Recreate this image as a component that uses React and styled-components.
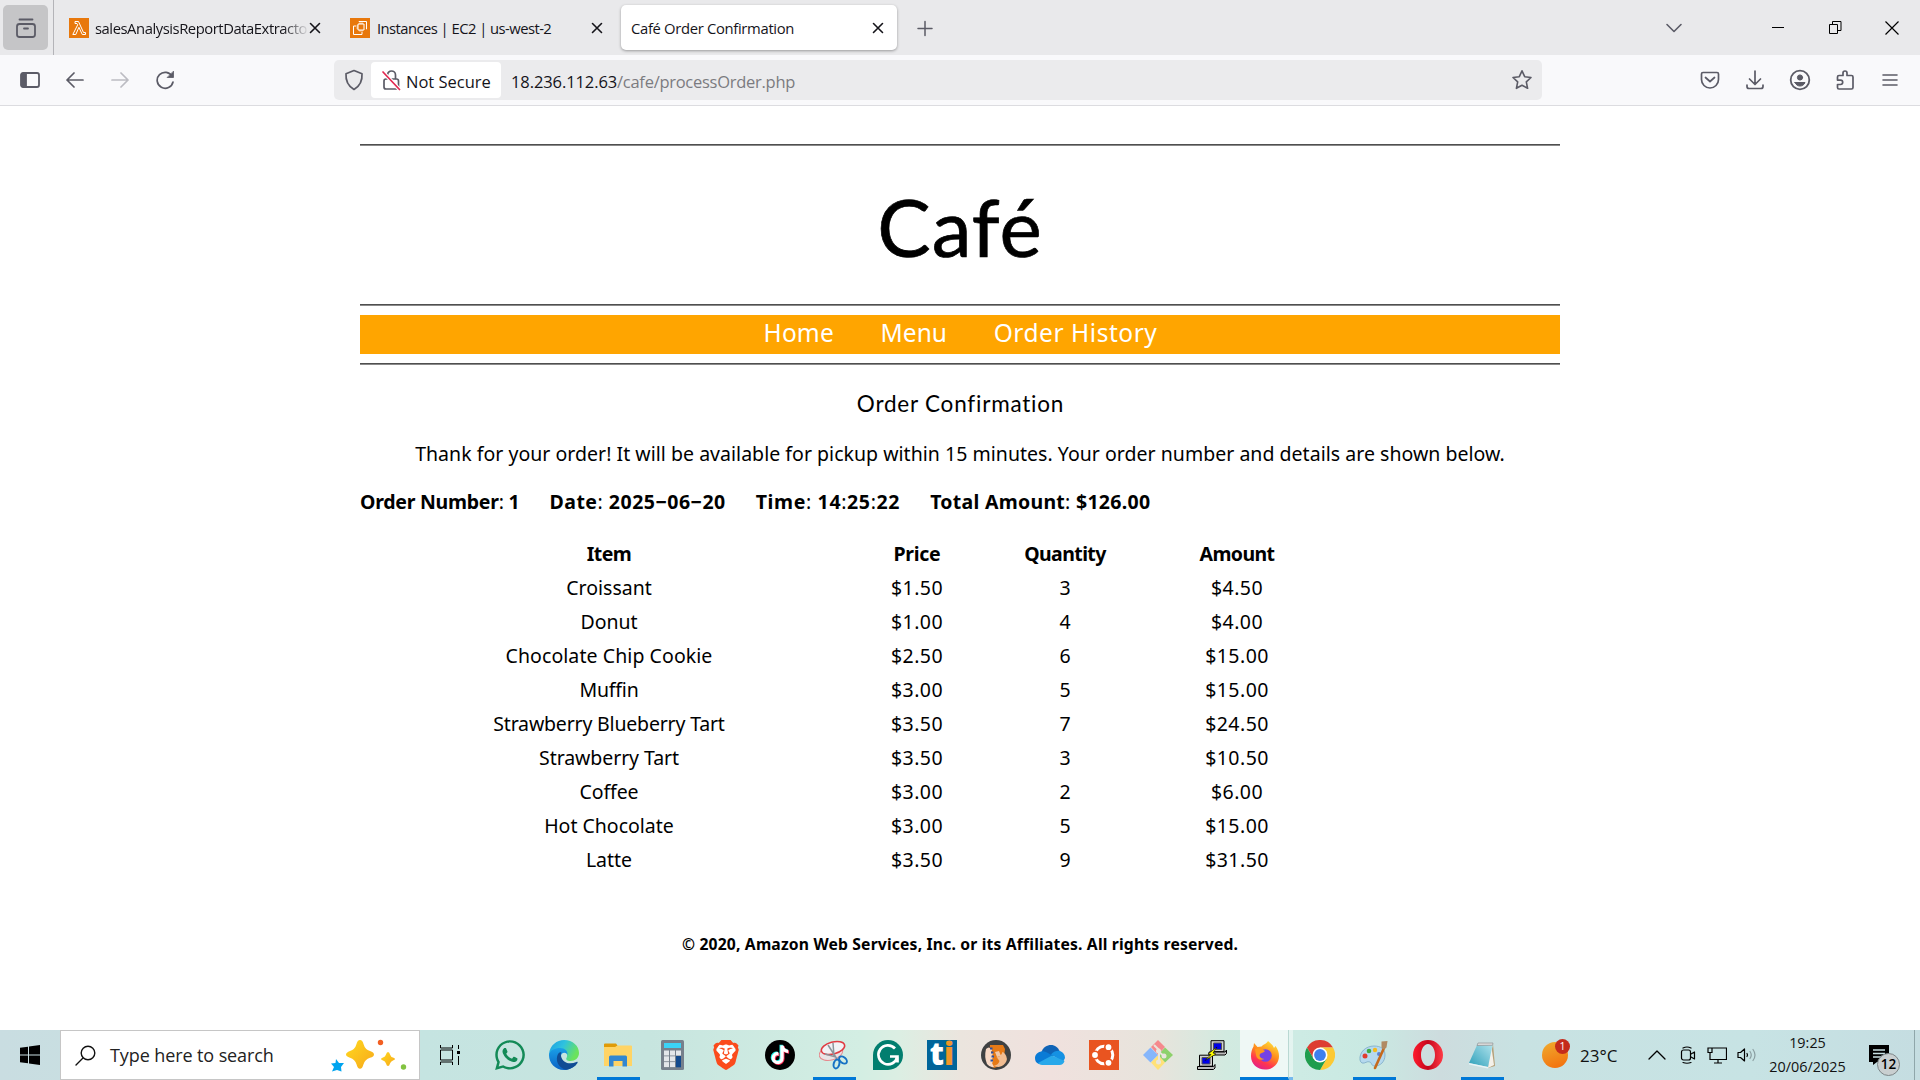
import React from "react";
import styled, { createGlobalStyle } from "styled-components";
import { FaWhatsapp, FaBrave, FaTiktok } from "react-icons/fa6";

const UI = `"Segoe UI", "Open Sans", "Noto Sans", sans-serif`;
const BODY = `"Lucida Sans", "Noto Sans", "Open Sans", sans-serif`;
const HAND = `"Comic Sans MS", Lato, "Open Sans", sans-serif`;

const Global = createGlobalStyle`
  * { box-sizing: border-box; }
  body { margin: 0; background: #fff; overflow: hidden; }
  svg { display: block; flex: none; }
`;
const Screen = styled.div`
  width: 1920px; height: 1080px; display: flex; flex-direction: column;
  background: #fff; font-family: ${UI}; color: #15141a;
`;
const Text = styled.span`
  letter-spacing: ${(p) => p.$ls || 0}px; white-space: pre;
  ${(p) => p.$color && `color: ${p.$color};`}
`;

/* ---------- tab strip ---------- */
const TabStrip = styled.header`
  height: 55px; flex: none; display: flex; align-items: center; background: #e9e9eb; padding-left: 3px;
`;
const ViewButton = styled.div`
  width: 45px; height: 45px; border-radius: 5px; background: #c5c5c7;
  display: flex; align-items: center; justify-content: center; margin-right: 5px;
`;
const Tab = styled.div`
  width: 276px; height: 45px; margin-left: ${(p) => p.$gap || 0}px; padding: 0 ${(p) => p.$right || 13}px 0 ${(p) => p.$left}px;
  display: flex; align-items: center; border-radius: 5px; font-size: 14.8px; color: #15141a;
  background: ${(p) => (p.$active ? "#fff" : "transparent")};
  box-shadow: ${(p) => (p.$active ? "0 1px 3px rgba(0,0,0,.35)" : "none")};
`;
const StripEdge = styled.div`width: 1px; height: 55px; background: #b4b4b8;`;
const TabTitle = styled.div`
  flex: 1; min-width: 0; overflow: hidden; margin-left: ${(p) => p.$left || 0}px; line-height: 24px;
  ${(p) => p.$fade && "-webkit-mask-image: linear-gradient(90deg,#000 88%,transparent 100%);"}
`;
const Spacer = styled.div`flex: ${(p) => (p.$w ? "none" : 1)}; width: ${(p) => p.$w || 0}px;`;
const WindowButtons = styled.div`display: flex; align-items: center; height: 55px;`;
const WinCell = styled.div`width: ${(p) => p.$w}px; display: flex; justify-content: center;`;

/* ---------- tool bar ---------- */
const ToolBar = styled.div`
  height: 51px; flex: none; display: flex; align-items: center; background: #f9f9fb; border-bottom: 1px solid #dcdce0;
  padding-left: 7px;
`;
const ToolCell = styled.div`width: 45px; display: flex; justify-content: center; color: ${(p) => p.$c || "#5b5b66"};`;
const UrlBar = styled.div`
  width: 1208px; height: 40px; border-radius: 5px; background: #ebebed; display: flex; align-items: center;
  margin-left: 147px; padding: 0 9px 0 9px; font-size: 16.5px; line-height: 24px; color: #15141a;
`;
const UrlText = styled.div`padding-top: 4px;`;
const Security = styled.div`
  width: 130px; height: 36px; border-radius: 4px; background: #fff; display: flex; align-items: center;
  margin: 0 10px 0 6px; padding-left: 11px; gap: 5px;
`;
const ToolIcons = styled.div`display: flex; align-items: center; margin-left: 145px;`;

/* ---------- page ---------- */
const Page = styled.main`
  width: 1200px; margin: 0 auto; flex: 1; padding-top: 38px; color: #000;
  font-family: ${BODY}; font-size: 19.5px; line-height: 34px;
`;
const Rule = styled.hr`
  margin: 0; height: 2px; border: 0; border-top: 1px solid #4f4f4f; background: #8a8a8a;
`;
const Title = styled.h1`
  margin: 0; height: 158px; padding-top: 32px; text-align: center; font: 400 80px/96px ${HAND};
  -webkit-text-stroke: .7px #000;
`;
const Nav = styled.nav`
  height: 39px; margin: 9px 0; background: orange; color: #fff; display: flex; justify-content: center;
  gap: 46.5px; font-size: 24.5px; line-height: 36px; padding-left: 1px;
`;
const Heading = styled.h2`
  margin: 19px 0 0; padding-left: 1px; text-align: center; font: 400 22.5px/40px ${HAND};
`;
const Thanks = styled.p`margin: 13px 0 0; text-align: center; line-height: 34px;`;
const Summary = styled.p`margin: 14px 0 0; font-weight: 700; display: flex; gap: 30px; line-height: 34px;`;
const Thin = styled.span`font-weight: 400;`;
const Grid = styled.section`display: grid; margin-top: 18px; grid-template-columns: 498px 118px 178px 166px; text-align: center;`;
const Head = styled.div`font-weight: 700; height: 34px;`;
const Cell = styled.div`height: 34px;`;
const Footer = styled.footer`margin-top: 50px; text-align: center; font-weight: 700; font-size: 15.7px; line-height: 34px;`;

/* ---------- task bar ---------- */
const TaskBar = styled.footer`
  height: 50px; flex: none; display: flex; font-family: ${UI};
  background: linear-gradient(90deg,#c9dde1 0,#c5e4e1 420px,#c7e5df 650px,#d3eee3 860px,#dceee3 900px,#ebe5de 960px,#f0e1de 1050px,#e7e4dc 1160px,#d2eae0 1225px,#cdebe4 1300px,#c9e9e2 1370px,#cddcde 1440px,#c8e2e2 1520px,#c7e3e4 1750px,#c5dde1 1920px);
`;
const Start = styled.div`width: 60px; display: flex; align-items: center; justify-content: center;`;
const Search = styled.div`
  width: 360px; background: #fff; border: 1px solid #c6c6c6; display: flex; align-items: center;
  padding: 0 11px 0 14px; font-size: 18px; color: #222; gap: 14px;
`;
const AppSlot = styled.div`
  width: ${(p) => p.$w || 54}px; height: 50px; display: flex; align-items: center; justify-content: center;
`;
const AppFace = styled.div`
  width: 43px; height: 50px; display: flex; align-items: center; justify-content: center;
  border-bottom: ${(p) => (p.$open ? "3px solid #0078d7" : "0")}; padding-top: ${(p) => (p.$open ? 3 : 0)}px;
`;
const FoxSlot = styled.div`
  width: 49px; height: 50px; background: rgba(255,255,255,.65); border-bottom: 3px solid #0078d7; padding: 3px 0 0 1px;
  display: flex; align-items: center; justify-content: center; border-right: 1px solid #b9d8d2;
`;
const FoxStack = styled.div`width: 4px; height: 50px; background: rgba(255,255,255,.45); border-bottom: 3px solid #76b9ed;`;
const Circle = styled.div`
  width: 30px; height: 30px; border-radius: 50%; background: #000; display: flex; align-items: center; justify-content: center;
`;
const Tray = styled.div`display: flex; align-items: center; flex: 1; color: #111; > * { flex: none; }`;
const Weather = styled.div`position: relative; width: 26px; height: 26px; border-radius: 50%; background: linear-gradient(160deg,#f0ac2e,#f36c0c); margin-left: 33px;`;
const WeatherBadge = styled.div`
  position: absolute; left: 13px; top: -3px; width: 15px; height: 15px; border-radius: 50%; background: #c42b1c;
  color: #fff; font-size: 10.5px; line-height: 15px; text-align: center;
`;
const Temp = styled.div`font-size: 17px; width: 73.5px; padding-left: 12px;`;
const TrayIcon = styled.div`width: ${(p) => p.$w}px; display: flex; justify-content: center;`;
const Clock = styled.div`width: 88px; text-align: center; font-size: 14.4px; line-height: 24px;`;
const Action = styled.div`position: relative; margin-left: 17.5px; width: 45px;`;
const ActionCount = styled.div`
  position: absolute; left: 8px; top: 8px; width: 23px; height: 23px; border-radius: 50%; background: #c9cfd0; border: 1px solid #7d8688;
  font-size: 13.5px; line-height: 21px; text-align: center; color: #000; font-weight: 600;
`;
const EdgeLine = styled.div`width: 1px; height: 50px; background: #8fa6aa;`;

const S = ({ w = 20, h = w, vb, sw = 1.5, c = "currentColor", children }) => (
  <svg width={w} height={h} viewBox={vb || `0 0 ${w} ${h}`} fill="none" stroke={c} strokeWidth={sw} strokeLinecap="round" strokeLinejoin="round">{children}</svg>
);
const Close = () => <S w={12} c="#15141a" sw={1.6}><path d="M1.5 1.5l9 9M10.5 1.5l-9 9" /></S>;

const Sparkles = () => (
  <svg width="78" height="34" viewBox="0 0 78 34">
    <defs><linearGradient id="gold" x1="0" y1="0" x2="1" y2="1"><stop offset="0" stopColor="#ffd91f" /><stop offset="1" stopColor="#f7a81b" /></linearGradient></defs>
    <path d="M19 2q2.500 0 3.500 4 1.500 5.500 6.500 7 4 1.200 4 3.500t-4 3.200q-5 1.500-6.500 6.500-1.200 4.500-3.500 4.500t-3.500-4.500q-1.500-5-6.500-6.500-4-1.200-4-3.200t4-3.500q5-1.500 6.500-7 1-4 3.500-4z" transform="translate(11 0)" fill="url(#gold)" />
    <path d="M58 14q1.500 0 2 2.500.8 2.500 3 3 2 .7 2 1.500t-2 1.500q-2.300.8-3 3-.7 2.500-2 2.500t-2-2.500q-.8-2.300-3-3-2-.7-2-1.500t2-1.500q2.300-.7 3-3 .6-2.500 2-2.500z" fill="url(#gold)" />
    <path d="M6 21l3 4 5 0-3 4 .5 4.500-4.500-1.500-5 1.500 2-4.500-3-3.500 4.500-.5z" fill="#00a4ef" />
    <circle cx="50.500" cy="4.500" r="2.700" fill="#f25f22" /><circle cx="73.500" cy="29" r="2.700" fill="#82c341" />
  </svg>
);
const Edge = () => (
  <svg width="30" height="30" viewBox="0 0 30 30">
    <defs><linearGradient id="eg" x1="0" x2="1" y1="0" y2=".4"><stop offset="0" stopColor="#1b9de2" /><stop offset=".5" stopColor="#2fc2df" /><stop offset="1" stopColor="#6be35c" /></linearGradient>
      <linearGradient id="eb" x1="0" x2="0" y1="0" y2="1"><stop offset="0" stopColor="#1a9fe8" /><stop offset="1" stopColor="#0a62c4" /></linearGradient></defs>
    <path d="M0 14C1 5 8 0 15 0c9 0 15 6 15 13 0 5-4 8-8.500 8-3.500 0-5-1.500-4-3 1.500-2.500.5-7-5-7C6 11 0 13 0 17z" fill="url(#eg)" />
    <path d="M0 15C1 10 6 8 11 8c5 0 8 3 7.500 7-1-3-6-3.500-6.500 1-.7 6 5 13 15 8-3 4-8 6-12 6C6 30 0 23 0 15z" fill="url(#eb)" />
    <path d="M9 14c-3 6 0 14 8 15.700C22 29 26 27 28.500 23c.5-1-.3-1.500-1-1-7 3-14 1-15.500-6-.3-2 0-3 .5-4-1.500 0-2.700.7-3.500 2z" fill="#104c94" />
  </svg>
);
const Folder = () => (
  <svg width="28" height="24" viewBox="0 0 28 24"><path d="M0 1.500Q0 .5 1 .5h11l1.500 2-2 3H0z" fill="#e09b07" /><path d="M0 4h11l2.500-1.500H27a1 1 0 011 1V23H0z" fill="#ffd465" /><path d="M5 23.500V14q0-1.500 1.500-1.500h15q1.500 0 1.500 1.500v9.500h-4.500V18h-9v5.500z" fill="#3287d1" /></svg>
);
const Calc = () => (
  <svg width="23" height="30" viewBox="0 0 23 30"><rect width="23" height="30" rx="1.500" fill="#76808c" /><rect x="3" y="3" width="17" height="5" fill="#3bd3f7" />
    {[0, 1, 2].map((r) => [0, 1, 2].map((c) => (c === 2 && r > 0 ? null : <rect key={`${r}${c}`} x={3 + c * 6} y={10.5 + r * 5.8} width="5" height="5" fill="#e3e6ea" />)))}
    <rect x="15" y="16" width="5" height="11.300" fill="#134a8e" /></svg>
);
const Lion = () => (
  <svg width="28" height="30" viewBox="0 0 28 30"><path d="M6 5L14 3.500 22 5 24 14 20 24 14 28 8 24 4 14z" fill="#fff" /><g transform="translate(1 0)"><FaBrave size={30} x={-2} color="#fb4b1c" /></g></svg>
);
const Snip = () => (
  <svg width="30" height="30" viewBox="0 0 30 30" fill="none"><ellipse cx="12" cy="13" rx="12" ry="7" transform="rotate(-15 12 13)" fill="#e9e4e6" stroke="#e58a8e" /><ellipse cx="14" cy="8" rx="12" ry="6" transform="rotate(-15 14 8)" fill="#f2f2f5" stroke="#e03b42" strokeWidth="1.500" /><path d="M9 5l9 14M14 3l1 13M6 14l11 3" stroke="#8c949b" strokeWidth="1.500" /><ellipse cx="17.500" cy="24" rx="2.800" ry="4.500" transform="rotate(15 17.500 24)" stroke="#1672c4" strokeWidth="2" /><ellipse cx="24" cy="20" rx="2.800" ry="4.500" transform="rotate(-50 24 20)" stroke="#1672c4" strokeWidth="2" /></svg>
);
const Grammarly = () => (
  <svg width="30" height="30" viewBox="0 0 30 30" fill="none"><path d="M15 0a15 15 0 110 30H0V15A15 15 0 0115 0z" fill="#027e6f" /><path d="M22 8.500a9.500 9.500 0 102.300 8H17M24.500 16.500v6" stroke="#fff" strokeWidth="2.700" /></svg>
);
const TiBox = styled.div`
  width: 30px; height: 30px; background: #00659a; color: #fff; display: flex; justify-content: center;
  font: 800 31px/27px "Open Sans", sans-serif; b { color: #f0962a; font-weight: 800; }
`;
const Hand = () => (
  <svg width="30" height="30" viewBox="0 0 30 30"><circle cx="15" cy="15" r="15" fill="#3f4142" /><path d="M9 5h13l2 4-2 16-9 3-5-4z" fill="#e67a17" /><path d="M5 9q3-3 5 0 2 1 0 3 3 1 1 3.500 2 1.500 0 3.500 2 2 0 4l2 4q-4 1-7-3-3-7-1-15z" fill="#f7d9c6" /><path d="M22 12q5 4 3.500 9-2 5-8 6l-5-1q5-1 6-5l-3-4q4 1 6-5z" fill="#f1bd92" /><path d="M14 12l4-1 2 5-4 1z" fill="#f1c7a8" /><path d="M9 7.500h2.500v2H9zM10 11.500h2.500v2H10zM10.500 15.500H13v2h-2.500zM9.500 19.500H12v2H9.500z" fill="#2e50a0" /></svg>
);
const Cloud = () => (
  <svg width="30" height="20" viewBox="0 0 30 20"><path d="M6 8C8 2 12 0 16 0c4 0 7 2.500 8.500 6L15 14z" fill="#0f63b6" /><path d="M6.500 6.500C10 5.500 13 8 18 11L4 19C1 18 0 16 0 13c0-3 2.500-6 6.500-6.500z" fill="#0a7bd6" /><path d="M16 9.500c3-4 8-4 9.500-3.300C28 7 30 9.500 30 13l-2 4z" fill="#1591e3" /><path d="M3 18L17 10.500 29.500 16c-.8 2.700-2.500 4-5 4H7q-2.500 0-4-2z" fill="#28a8ea" /></svg>
);
const Ubuntu = () => (
  <svg width="30" height="30" viewBox="0 0 30 30" fill="none"><path d="M0 0h30v30H0z" fill="#e95420" /><circle cx="15" cy="15" r="8.800" stroke="#fff" strokeWidth="3" /><g fill="#fff" stroke="#e95420" strokeWidth="1.600"><circle cx="6" cy="15" r="3.700" /><circle cx="19.500" cy="7.200" r="3.700" /><circle cx="19.500" cy="22.800" r="3.700" /></g></svg>
);
const Git = () => (
  <svg width="30" height="30" viewBox="0 0 30 30"><path d="M15 0l7 7-7 8-7-8z" fill="#f5898d" /><path d="M22 7.500l8 7.500-8 7.500-7-7.500z" fill="#8dd16b" /><path d="M8 22.500l7-7.500 7 7.500-7 7.500z" fill="#ffe178" /><path d="M0 15l7.500-7.500L15 15l-7.500 7.500z" fill="#86b6fb" /><path d="M11 5l5 5v12M16 12l5 4" stroke="#e9e5dd" strokeWidth="2" fill="none" /><g fill="#e9e5dd"><circle cx="15.500" cy="11" r="2.500" /><circle cx="21" cy="16" r="2.500" /><circle cx="15.500" cy="22" r="2.500" /></g></svg>
);
const Putty = () => (
  <svg width="30" height="30" viewBox="0 0 30 30" stroke="#000"><g><path d="M14 .700h13v11H14z" fill="#d0d0d0" /><path d="M16.500 3h8v6.500h-8z" fill="#0000e8" stroke="#555" /><path d="M12 12h16l1.500-2v3.500L28 15H12z" fill="#bbb" /></g><g transform="translate(-11.500 14.500)"><path d="M14 .700h13v11H14z" fill="#d0d0d0" /><path d="M16.500 3h8v6.500h-8z" fill="#0000e8" stroke="#555" /><path d="M12 12h16l1.500-2v3.500L28 15H12z" fill="#bbb" /></g><path d="M20 7l-9 7 3 .500-6 6 11-6.500-3-1z" fill="#ff0" strokeWidth=".6" /></svg>
);
const Fox = () => (
  <svg width="30" height="30" viewBox="0 0 30 30">
    <defs><linearGradient id="fx" x1=".8" x2=".3" y1="0" y2="1"><stop offset="0" stopColor="#ffe63a" /><stop offset=".45" stopColor="#ff8a1c" /><stop offset=".75" stopColor="#ff3550" /><stop offset="1" stopColor="#e0208c" /></linearGradient></defs>
    <path d="M18 1c2 2 5 4 6 7l1.500-2C28 9 29 13 29 16c0 8-6 13.500-14 13.500S1 24 1 16c0-4 1-7 2.500-9.500L4 3l3.500 4 4-.5c2-2.500 5-2.500 6.500-5.500z" fill="url(#fx)" /><circle cx="15.500" cy="15.500" r="6.300" fill="#7542e5" /><path d="M5 9c4-2 7 0 10 2-1 2-4 1.500-5 3-1.500 2 1 5 4.500 5-4 2-8 0-8.500-4z" fill="#ff9a1f" />
  </svg>
);
const Chrome = () => (
  <svg width="30" height="30" viewBox="0 0 30 30"><path d="M2 7.500A15 15 0 0128 7.500H15L8.500 18.700z" fill="#dd3d31" /><path d="M28 7.500A15 15 0 0115 30l6.500-11.200V11L15 7.500z" fill="#fcc934" /><path d="M2 7.500A15 15 0 0015 30l6.500-11.200L15 22l-6.500-3.300z" fill="#1f9d4e" /><circle cx="15" cy="15" r="7.500" fill="#fff" /><circle cx="15" cy="15" r="5.900" fill="#3f7fee" /></svg>
);
const Paint = () => (
  <svg width="30" height="30" viewBox="0 0 30 30"><path d="M1 20C0 12 7 6 15 6c7 0 11 3 11 9 0 7-5 11-10 11-4 0-3-3-5-4-3-1.500-5 2-8 1q-1.500-.7-2-3z" fill="#b5d9ee" stroke="#7ba9c6" strokeWidth=".8" /><circle cx="6" cy="16" r="2.500" fill="#e23b2e" /><circle cx="10" cy="11" r="2.300" fill="#3faa43" /><circle cx="16" cy="10" r="2.200" fill="#f4ba1d" /><circle cx="20" cy="14" r="2" fill="#5c80cf" /><path d="M16 28L25 8" stroke="#c66a1c" strokeWidth="2.600" strokeLinecap="round" /><path d="M22.500 1.500l6-.5-1 6.500-3 2-2-2z" fill="#b08a62" /></svg>
);
const Opera = () => (
  <svg width="30" height="30" viewBox="0 0 30 30"><defs><linearGradient id="op" x1="0" x2="1"><stop offset="0" stopColor="#ff1b2d" /><stop offset=".5" stopColor="#c5061b" /><stop offset="1" stopColor="#ff3b46" /></linearGradient></defs><path fillRule="evenodd" d="M15 0a15 15 0 110 30 15 15 0 010-30zm0 4c-4 0-7 5-7 11s3 11 7 11 7-5 7-11-3-11-7-11z" fill="url(#op)" /></svg>
);
const Note = () => (
  <svg width="28" height="28" viewBox="0 0 28 28"><defs><linearGradient id="nt" x1="0" x2="1" y1="1" y2="0"><stop offset="0" stopColor="#2b9fb9" /><stop offset="1" stopColor="#b7e6ef" /></linearGradient></defs><path d="M25 3l2 22-7 2z" fill="#b6a079" /><path d="M23 3l3 21-6 3z" fill="#f4f1ea" /><path d="M10 2h15l-5 24L1 22z" fill="url(#nt)" /><path d="M10 2h15l-.4 2.300L9 4.500z" fill="#dcdcdc" stroke="#888" strokeWidth=".6" /><path d="M1 22l19 4v1.500L1 23.500z" fill="#e8f4f6" /></svg>
);

const apps = [
  { icon: <FaWhatsapp size={34} color="#138a57" /> },
  { icon: <Edge /> },
  { icon: <Folder />, open: true },
  { icon: <Calc /> },
  { icon: <Lion /> },
  {
    icon: (
      <Circle>
        <svg width="22" height="22" viewBox="0 0 22 22"><FaTiktok size={19} x={0.5} y={0.5} color="#25f4ee" /><FaTiktok size={19} x={2.3} y={2} color="#fe2c55" /><FaTiktok size={19} x={1.4} y={1.2} color="#fff" /></svg>
      </Circle>
    ),
  },
  { icon: <Snip />, open: true },
  { icon: <Grammarly /> },
  { icon: <TiBox>t<b>i</b></TiBox> },
  { icon: <Hand /> },
  { icon: <Cloud /> },
  { icon: <Ubuntu /> },
  { icon: <Git /> },
  { icon: <Putty /> },
];
const lateApps = [
  { icon: <Chrome /> },
  { icon: <Paint />, open: true },
  { icon: <Opera /> },
  { icon: <Note />, open: true },
];
const heads = [
  ["Item", -0.6],
  ["Price", -0.3],
  ["Quantity", -0.6],
  ["Amount", -0.6],
];
const items = [
  ["Croissant", "$1.50", "3", "$4.50"],
  ["Donut", "$1.00", "4", "$4.00"],
  ["Chocolate Chip Cookie", "$2.50", "6", "$15.00"],
  ["Muffin", "$3.00", "5", "$15.00"],
  ["Strawberry Blueberry Tart", "$3.50", "7", "$24.50"],
  ["Strawberry Tart", "$3.50", "3", "$10.50"],
  ["Coffee", "$3.00", "2", "$6.00"],
  ["Hot Chocolate", "$3.00", "5", "$15.00"],
  ["Latte", "$3.50", "9", "$31.50"],
];
const nameSpacing = { "Chocolate Chip Cookie": 0.08, "Strawberry Blueberry Tart": -0.18, "Strawberry Tart": -0.08, Coffee: -0.1, Muffin: -0.2 };

export default function App() {
  return (
    <Screen>
      <Global />
      <TabStrip>
        <ViewButton><S w={22} c="#5b5b66" sw={1.8}><rect x="2" y="7" width="18" height="13" rx="2.500" /><path d="M4.500 2.500h13M9 11.500h4" /></S></ViewButton>
        <StripEdge />
        <Tab $left={15} $right={9}>
          <svg width="20" height="20" viewBox="0 0 20 20" fill="none"><path d="M0 0h20v20H0z" fill="#e8780c" /><path d="M6 3.500h3.500L14.500 14.500h2v2H13.300L9.900 9.300 6.800 16.500H3.800L8.700 6.800 8 5.500H6z" stroke="#fff" strokeWidth="1" /></svg>
          <TabTitle $left={6} $fade><Text $ls={-0.45}>salesAnalysisReportDataExtracto</Text></TabTitle>
          <Close />
        </Tab>
        <Tab $left={20} $right={3}>
          <svg width="20" height="20" viewBox="0 0 20 20" fill="none" stroke="#fff"><path d="M0 0h20v20H0z" fill="#e8780c" stroke="none" /><path d="M8 6h6v6H8zM12 14v2.500H3.500V8H6M9 4V3.500h7.500V11H16M10 6V4.500M12 6V4.500M10 13.500V12M12 13.500V12M6.500 8H8M6.500 10H8" /></svg>
          <TabTitle $left={7}><Text $ls={-0.55}>Instances | EC2 | us-west-2</Text></TabTitle>
          <Close />
        </Tab>
        <Tab $active $left={10} $gap={15}>
          <TabTitle><Text $ls={-0.32}>Café Order Confirmation</Text></TabTitle>
          <Close />
        </Tab>
        <Spacer $w={20} />
        <S w={16} h={18} c="#5b5b66"><path d="M8 2.500v14M1 9.500h14" /></S>
        <Spacer />
        <WindowButtons>
          <WinCell $w={60}><S w={18} c="#5b5b66" sw={1.6}><path d="M2 5.500l7 7 7-7" /></S></WinCell>
          <Spacer $w={45} />
          <WinCell $w={58}><svg width="12" height="2"><path d="M0 0h12v1H0z" fill="#000" /></svg></WinCell>
          <WinCell $w={56}><svg width="13" height="13" fill="none" stroke="#000"><path d="M.5 3.500h8v9h-8zM3.500 3V.500h8.500v9H9" /></svg></WinCell>
          <WinCell $w={57}><svg width="14" height="14" fill="none" stroke="#000" strokeWidth="1.200"><path d="M.5.500l13 13M13.500.500l-13 13" /></svg></WinCell>
        </WindowButtons>
      </TabStrip>
      <ToolBar>
        <ToolCell><S w={20} h={16} sw={1.8}><rect x="1" y="1" width="18" height="14" rx="2" /><path d="M2 2h4v12H2z" fill="currentColor" /></S></ToolCell>
        <ToolCell><S w={18} sw={1.7}><path d="M1 9h16M8 2L1 9l7 7" /></S></ToolCell>
        <ToolCell $c="#bcbcc2"><S w={18} sw={1.7}><path d="M1 9h16M10 2l7 7-7 7" /></S></ToolCell>
        <ToolCell><S w={20} sw={1.7}><path d="M17.200 6.500A8 8 0 1018 12" /><path d="M18.500 1.500v6h-6z" fill="currentColor" strokeWidth=".8" /></S></ToolCell>
        <UrlBar>
          <S w={22} c="#5b5b66" sw={1.7}><path d="M11 1.500l8 3.200c.5 7-2.500 12.500-8 15.800C5.500 17.200 2.500 11.700 3 4.700z" /></S>
          <Security>
            <S w={19} h={22} c="#5b5b66" sw={1.7}><rect x="2" y="10" width="14.500" height="10" rx="2" /><path d="M5.500 9.500V6a4 4 0 018 0v3.500" /><path d="M1 3l16.500 17.500" stroke="#fff" strokeWidth="4" /><path d="M1 3l16.500 17.500" stroke="#e22850" /></S>
            <UrlText><Text>Not Secure</Text></UrlText>
          </Security>
          <UrlText><Text $ls={-0.1}>18.236.112.63</Text><Text $ls={-0.27} $color="#7b7b80">/cafe/processOrder.php</Text></UrlText>
          <Spacer />
          <S w={22} c="#5b5b66" sw={1.6}><path d="M11 1.800l2.700 5.900 6.300.8-4.700 4.400 1.300 6.400L11 16.200l-5.600 3.100 1.300-6.400L2 8.500l6.300-.8z" /></S>
        </UrlBar>
        <ToolIcons>
          <ToolCell><S w={20} sw={1.7}><path d="M3 2.500h14q1.500 0 1.500 1.500v5.500a8.500 8.500 0 01-17 0V4Q1.500 2.500 3 2.500z" /><path d="M5.500 7.500l4.500 4 4.500-4" /></S></ToolCell>
          <ToolCell><S w={20} sw={1.7}><path d="M10 1v13M4.500 9l5.500 5.500L15.500 9M2 15v1.500Q2 18.500 4 18.500h12q2 0 2-2V15" /></S></ToolCell>
          <ToolCell><S w={22} sw={1.8}><circle cx="11" cy="11" r="9.300" /><circle cx="11" cy="8.500" r="2.600" fill="currentColor" strokeWidth="1" /><path d="M6 13.500h10c-1 2.500-3 3.500-5 3.500s-4-1-5-3.500z" fill="currentColor" strokeWidth="1" /></S></ToolCell>
          <ToolCell><S w={20} h={22} sw={1.7}><path d="M4 6.500h4V4a2 2 0 014 0v2.500h4.500q1.500 0 1.500 1.500v10.500q0 1.500-1.500 1.500H4q-1.500 0-1.500-1.500v-3h3a2 2 0 000-4.400h-3V8Q2.500 6.500 4 6.500z" /></S></ToolCell>
          <ToolCell><S w={16} sw={1.6}><path d="M1 3h14M1 8h14M1 13h14" /></S></ToolCell>
        </ToolIcons>
      </ToolBar>

      <Page>
        <Rule />
        <Title><Text $ls={1}>Café</Text></Title>
        <Rule />
        <Nav><Text $ls={0.15}>Home</Text><Text $ls={0.1}>Menu</Text><Text $ls={0.55}>Order History</Text></Nav>
        <Rule />
        <Heading><Text $ls={0.78}>Order Confirmation</Text></Heading>
        <Thanks><Text $ls={0.03}>Thank for your order! It will be available for pickup within 15 minutes. Your order number and details are shown below.</Text></Thanks>
        <Summary>
          <Text $ls={-0.25}>Order Number<Thin>:</Thin> 1</Text>
          <Text $ls={0.5}>Date<Thin>:</Thin> 2025−06−20</Text>
          <Text $ls={0.64}>Time<Thin>:</Thin> 14<Thin>:</Thin>25<Thin>:</Thin>22</Text>
          <Text $ls={0.28}>Total Amount<Thin>:</Thin> $126.00</Text>
        </Summary>
        <Grid>
          {heads.map(([h, ls]) => <Head key={h}><Text $ls={ls}>{h}</Text></Head>)}
          {items.map((row) => row.map((v, i) => <Cell key={row[0] + i}><Text $ls={i === 0 ? nameSpacing[v] : i === 2 ? 0 : 0.45}>{v}</Text></Cell>))}
        </Grid>
        <Footer><Text $ls={0.17}>© 2020, Amazon Web Services, Inc. or its Affiliates. All rights reserved.</Text></Footer>
      </Page>

      <TaskBar>
        <Start><svg width="20" height="20" viewBox="0 0 20 20"><path d="M0 2.800l8-1.100v7.800H0zM9 1.500L20 0v9.500H9zM0 10.500h8v7.800l-8-1.100zM9 10.500h11V20L9 18.500z" /></svg></Start>
        <Search>
          <S w={21} c="#111" sw={1.4}><circle cx="13" cy="8" r="6.800" /><path d="M8 13l-7 7" /></S>
          <Text $ls={-0.1}>Type here to search</Text>
          <Spacer />
          <Sparkles />
        </Search>
        <AppSlot $w={60}><svg width="20" height="20" viewBox="0 0 20 20" fill="none" stroke="#000"><path d="M.5 0v3h12V0M.5 20v-3h12v3M.5 5h12v10H.500zM18.500 0v4M18.500 11v9" /><path d="M17 6h3v3h-3z" fill="#000" stroke="none" /></svg></AppSlot>
        <Spacer $w={3} />
        {apps.map((a, i) => <AppSlot key={i}><AppFace $open={a.open}>{a.icon}</AppFace></AppSlot>)}
        <Spacer $w={1} />
        <FoxSlot><Fox /></FoxSlot><FoxStack />
        {lateApps.map((a, i) => <AppSlot key={i}><AppFace $open={a.open}>{a.icon}</AppFace></AppSlot>)}
        <Tray>
          <Weather><WeatherBadge>1</WeatherBadge></Weather>
          <Temp><Text>23°C</Text></Temp>
          <TrayIcon $w={31}><S w={18} c="#000" sw={1.3}><path d="M1 13l8-8 8 8" /></S></TrayIcon>
          <TrayIcon $w={31}><S w={16} h={18} c="#000" sw={1.2}><rect x="1.500" y="4" width="9" height="10" rx="2" /><path d="M11 8l3.500-2v7L11 11M3 2q4-2 8 0M3 16.500q4 1.500 8 0" /></S></TrayIcon>
          <TrayIcon $w={27}><svg width="20" height="17" viewBox="0 0 20 17" fill="none" stroke="#000" strokeWidth="1.200"><path d="M5 1h14.500v11.500H3V7M1 1h4v4.500H1zM3 5v3M11 13v3M7 16h8" /></svg></TrayIcon>
          <TrayIcon $w={33}><S w={20} h={16} c="#000" sw={1.2}><path d="M1 5.500h2.500L7.500 2v12l-4-3.500H1zM10 6.500q1 1.500 0 3" /><path d="M13 4.500q2.500 3.500 0 7M16 2.500q4 5.500 0 11" stroke="#8a9ea1" /></S></TrayIcon>
          <Clock><Text>19:25</Text><br /><Text>20/06/2025</Text></Clock>
          <Action><svg width="20" height="20" viewBox="0 0 20 20"><path d="M0 0h20v17H8l-4 3v-3H0z" /><path d="M4 5h12M4 8.500h12M4 12h8" stroke="#c8e0e2" strokeWidth="1.300" /></svg><ActionCount>12</ActionCount></Action>
          <EdgeLine />
        </Tray>
      </TaskBar>
    </Screen>
  );
}
